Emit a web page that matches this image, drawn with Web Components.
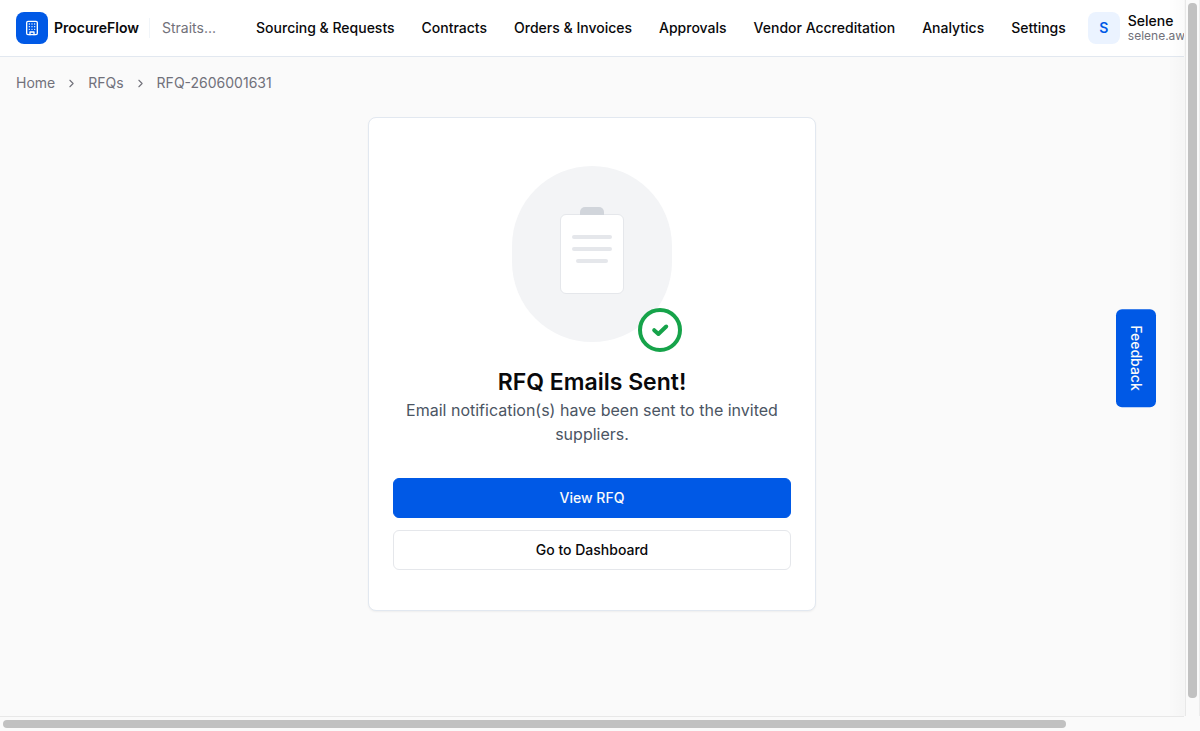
<!DOCTYPE html>
<html lang="en">
<head>
<meta charset="utf-8">
<title>RFQ Emails Sent</title>
<style>
  body { margin: 0; background: #fafafa; color: #09090b; font-family: Inter, "Liberation Sans", sans-serif; font-size: 14px; line-height: 20px; }
</style>
</head>
<body>
<app-shell>
  <app-header slot="header"></app-header>
  <bread-crumbs></bread-crumbs>
  <status-card>
    <sent-illustration slot="art"></sent-illustration>
    <span slot="title">RFQ Emails Sent!</span>
    <span slot="text">Email notification(s) have been sent to the invited suppliers.</span>
    <action-button slot="actions" variant="primary">View RFQ</action-button>
    <action-button slot="actions">Go to Dashboard</action-button>
  </status-card>
  <feedback-tab slot="overlay">Feedback</feedback-tab>
</app-shell>

<script>
function define(name, html) {
  const template = document.createElement('template');
  template.innerHTML = '<style>*{box-sizing:border-box}</style>' + html;
  customElements.define(name, class extends HTMLElement {
    constructor() {
      super();
      this.attachShadow({ mode: 'open' }).append(template.content.cloneNode(true));
    }
  });
}

define('app-shell', `
<style>
  :host { display: grid; grid-template-columns: minmax(0, 1fr) 16px; grid-template-rows: 1fr 15px; min-height: 100vh; }
  .view { position: relative; overflow: hidden; }
  .view::after { content: ""; position: absolute; top: 0; bottom: 0; right: 0; width: 16px; background: linear-gradient(to right, rgba(0,0,0,0), rgba(0,0,0,.02)); pointer-events: none; }
  scroll-bar.v { grid-column: 2; grid-row: 1; }
  scroll-bar.h { grid-column: 1; grid-row: 2; }
</style>
<div class="view">
  <slot name="header"></slot>
  <main><slot></slot></main>
  <slot name="overlay"></slot>
</div>
<scroll-bar class="v" axis="y"></scroll-bar>
<scroll-bar class="h" axis="x"></scroll-bar>
`);

define('scroll-bar', `
<style>
  :host { display: flex; background: #fafafa; }
  .thumb { background: #c1c1c1; border-radius: 4px; }
  :host([axis="y"]) { border-left: 1px solid #f6f6f6; border-right: 1px solid #ececec; padding: 3px 2px 18px 3px; box-shadow: inset 1px 0 #e8e8e8; }
  :host([axis="y"]) .thumb { flex: 1; }
  :host([axis="x"]) { border-top: 1px solid #e8e8e8; padding: 3px 0 3px 3px; }
  :host([axis="x"]) .thumb { width: 90%; }
</style>
<div class="thumb"></div>
`);

define('app-header', `
<style>
  :host { display: block; background: #fff; border-bottom: 1px solid #e2e8f0; }
  header { display: flex; align-items: center; height: 56px; padding-left: 16px; white-space: nowrap; }
  .logo { display: grid; place-items: center; width: 32px; height: 32px; border-radius: 8px; background: #0059e6; flex: none; }
  .brand { display: flex; align-items: center; gap: 6px; color: inherit; text-decoration: none; font-weight: 600; }
  .org { margin-left: 10px; padding-left: 12px; border-left: 1px solid #f1f5f9; color: #71717a; }
  nav { display: flex; gap: 27px; margin-left: 40px; }
  nav a { color: inherit; text-decoration: none; font-weight: 500; }
  .user { display: flex; align-items: center; gap: 8px; margin-left: 22px; }
  .avatar { display: grid; place-items: center; width: 32px; height: 32px; border-radius: 8px; background: #ebf3ff; color: #0059e6; font-weight: 600; flex: none; }
  .name { font-weight: 500; line-height: 16px; }
  .mail { font-size: 12px; line-height: 14px; color: #71717a; }
</style>
<header>
  <a class="brand" href="#"><span class="logo">
    <svg width="16" height="16" viewBox="0 0 24 24" fill="none" stroke="#fff" stroke-width="2" stroke-linecap="round" stroke-linejoin="round"><rect x="4" y="2" width="16" height="20" rx="2"/><path d="M9 22v-4h6v4M8 6h.01M16 6h.01M12 6h.01M12 10h.01M12 14h.01M16 10h.01M16 14h.01M8 10h.01M8 14h.01"/></svg>
  </span>ProcureFlow</a>
  <span class="org">Straits...</span>
  <nav>
    <a href="#">Sourcing &amp; Requests</a><a href="#">Contracts</a><a href="#">Orders &amp; Invoices</a><a href="#">Approvals</a><a href="#">Vendor Accreditation</a><a href="#">Analytics</a><a href="#">Settings</a>
  </nav>
  <div class="user">
    <div class="avatar">S</div>
    <div><div class="name">Selene</div><div class="mail">selene.aw</div></div>
  </div>
</header>
`);

define('bread-crumbs', `
<style>
  :host { display: block; padding: 16px 16px 0; color: #71717a; }
  nav { display: flex; align-items: center; gap: 10px; }
  a { color: inherit; text-decoration: none; }
  svg { width: 13px; height: 13px; }
</style>
<nav aria-label="Breadcrumb">
  <a href="#">Home</a>
  <svg viewBox="0 0 24 24" fill="none" stroke="currentColor" stroke-width="2" stroke-linecap="round" stroke-linejoin="round"><path d="m9 18 6-6-6-6"/></svg>
  <a href="#">RFQs</a>
  <svg viewBox="0 0 24 24" fill="none" stroke="currentColor" stroke-width="2" stroke-linecap="round" stroke-linejoin="round"><path d="m9 18 6-6-6-6"/></svg>
  <span aria-current="page">RFQ-2606001631</span>
</nav>
`);

define('status-card', `
<style>
  :host { display: block; padding: 24px 16px; }
  section { max-width: 448px; margin: 0 auto; padding: 48px 24px 40px; background: #fff; border: 1px solid #e2e8f0; border-radius: 8px; box-shadow: 0 1px 2px rgba(0,0,0,.05); text-align: center; }
  .art { display: flex; justify-content: center; margin-bottom: 24px; }
  h1 { margin: 0; font-size: 23px; line-height: 32px; font-weight: 600; }
  p { margin: 0 0 32px; font-size: 16px; line-height: 24px; color: #4b5563; }
  .actions { display: flex; flex-direction: column; gap: 12px; }
</style>
<section>
  <div class="art"><slot name="art"></slot></div>
  <h1><slot name="title"></slot></h1>
  <p><slot name="text"></slot></p>
  <div class="actions"><slot name="actions"></slot></div>
</section>
`);

define('sent-illustration', `
<style>
  :host { display: block; position: relative; }
  .disc { display: grid; place-items: center; width: 160px; height: 176px; border-radius: 80px; background: #f3f4f6; }
  .board { position: relative; display: flex; flex-direction: column; align-items: center; gap: 8px; width: 64px; height: 80px; padding-top: 20px; background: #fff; border: 1px solid #e5e7eb; border-radius: 6px; }
  .clip { position: absolute; top: -8px; width: 24px; height: 8px; border-radius: 5px 5px 0 0; background: #d1d5db; }
  .line { width: 40px; height: 4px; border-radius: 2px; background: #e5e7eb; }
  .short { width: 32px; }
  svg { position: absolute; right: -10px; bottom: -10px; }
</style>
<div class="disc"><div class="board"><div class="clip"></div><div class="line"></div><div class="line"></div><div class="line short"></div></div></div>
<svg width="44" height="44" viewBox="0 0 44 44" fill="#fff" stroke="#16a34a" stroke-width="4" stroke-linecap="round" stroke-linejoin="round"><circle cx="22" cy="22" r="20"/><path fill="none" d="M16.200 22.200 20.400 26 28.200 18.500"/></svg>
`);

define('action-button', `
<style>
  :host { display: block; }
  button { display: block; width: 100%; height: 40px; padding: 0; border: 1px solid #e5e7eb; border-radius: 6px; background: #fff; color: #09090b; font: 500 14px/20px Inter, "Liberation Sans", sans-serif; cursor: pointer; }
  :host([variant="primary"]) button { background: #0059e6; border-color: #0059e6; color: #fafafa; }
</style>
<button type="button"><slot></slot></button>
`);

define('feedback-tab', `
<style>
  :host { display: block; position: absolute; right: 28px; top: 50%; transform: translateY(-50%); }
  button { writing-mode: vertical-rl; padding: 16px 10px; border: 0; border-radius: 6px; background: #0059e6; color: #fafafa; font: 500 14px/20px Inter, "Liberation Sans", sans-serif; cursor: pointer; display: block; }
</style>
<button type="button"><slot></slot></button>
`);
</script>
</body>
</html>
